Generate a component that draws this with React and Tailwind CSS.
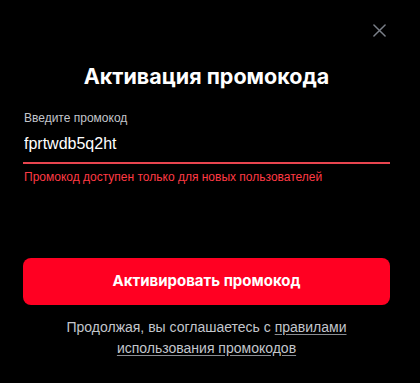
import React, { useState } from 'react';

export default function App() {
  const [code, setCode] = useState('fprtwdb5q2ht');

  return (
    <div className="w-[420px] h-[383px] bg-black flex flex-col pl-[23px] pr-[30px] pt-[20px] relative" style={{ fontFamily: '"Liberation Sans", Arial, sans-serif' }}>
      <button className="absolute top-[20px] right-[30px] p-1 text-[#7a7f88] hover:text-white" title="Закрыть">
        <svg className="w-[13px] h-[13px]" viewBox="0 0 14 14" fill="none" stroke="currentColor" strokeWidth={1.6}>
          <path strokeLinecap="round" d="M1 1l12 12M13 1L1 13" />
        </svg>
      </button>

      {/* Заголовок */}
      <h1 className="mt-[42px] text-center text-white text-[21.5px] leading-[28px] font-bold" style={{ fontFamily: 'Inter, "Noto Sans", sans-serif' }}>
        Активация промокода
      </h1>

      {/* Поле ввода */}
      <div className="mt-[21px]">
        <label className="block text-[12px] leading-[14px] text-[#c3c6cc] pl-px">Введите промокод</label>
        <input
          value={code}
          onChange={(e) => setCode(e.target.value)}
          className="w-full mt-[9px] bg-transparent text-white text-[16px] leading-[20px] outline-none pl-px pb-[8px] border-b-2 border-[#e8454f]"
        />
        <div className="mt-[5px] text-[12px] leading-[16px] text-[#ff3a44] pl-px">
          Промокод доступен только для новых пользователей
        </div>
      </div>

      <button className="mt-[73px] h-[47px] w-full rounded-[8px] bg-[#ff0022] hover:bg-[#e6001f] text-white text-[15px] font-bold" style={{ fontFamily: 'Inter, "Noto Sans", sans-serif' }}>
        Активировать промокод
      </button>

      <p className="mt-[12px] text-center text-[14px] leading-[21px] text-[#c3c6cc] px-[40px]">
        Продолжая, вы соглашаетесь с{' '}
        <a href="#" className="underline underline-offset-2 decoration-[#8a8d93]">правилами использования промокодов</a>
      </p>
    </div>
  );
}
